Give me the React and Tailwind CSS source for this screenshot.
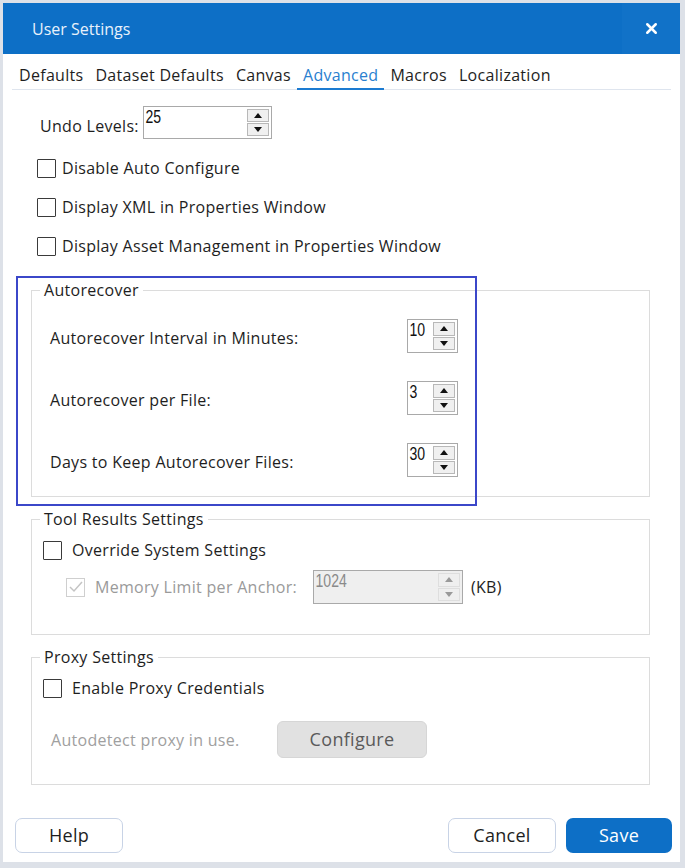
import { X } from 'lucide-react';

const ui = { fontFamily: '"Open Sans", "Noto Sans", sans-serif' };
const num = { fontFamily: '"Liberation Sans", "DejaVu Sans", sans-serif' };

function Arrow({ up, disabled }) {
    return (
        <svg width="8" height="5" viewBox="0 0 8 5">
            <polygon
                points={up ? '0,5 8,5 4,0' : '0,0 8,0 4,5'}
                fill={disabled ? '#9a9a9a' : '#111'}
            />
        </svg>
    );
}

function Spinner({ value, className, disabled }) {
    return (
        <div
            className={`flex justify-between border border-[#a9a9a9] ${disabled ? 'bg-[#efefef]' : 'bg-white'} ${className}`}
        >
            <span
                style={num}
                className={`inline-block origin-top-left scale-x-[0.78] pl-[2px] pt-[1px] text-[18px] leading-[19px] tracking-normal ${disabled ? 'text-[#8a8a8a]' : 'text-[#111]'}`}
            >
                {value}
            </span>
            <div className="flex flex-col gap-[1px] py-[2px] pr-[2px]">
                <div className={`flex w-[22px] flex-1 items-center justify-center border ${disabled ? 'border-[#dedede]' : 'border-[#b8b8b8] bg-[#f0f0f0]'}`}>
                    <Arrow up disabled={disabled} />
                </div>
                <div className={`flex w-[22px] flex-1 items-center justify-center border ${disabled ? 'border-[#dedede]' : 'border-[#b8b8b8] bg-[#f0f0f0]'}`}>
                    <Arrow disabled={disabled} />
                </div>
            </div>
        </div>
    );
}

function Check({ label, className = '', gap = 'gap-[6px]' }) {
    return (
        <label className={`flex items-center ${gap} ${className}`}>
            <span className="h-[19px] w-[19px] rounded-[1px] border-[1.5px] border-[#3a3a3a] bg-white" />
            <span className="text-[16px] leading-[20px] text-[#1e1e1e]">{label}</span>
        </label>
    );
}

function Group({ title, className = '', children }) {
    return (
        <fieldset className={`ml-[28px] mr-[30px] border border-[#dcdcdc] ${className}`}>
            <legend className="ml-[8px] px-[4px] text-[16px] leading-[20px] text-[#1e1e1e]">{title}</legend>
            {children}
        </fieldset>
    );
}

export default function App() {
    const tabs = ['Defaults', 'Dataset Defaults', 'Canvas', 'Advanced', 'Macros', 'Localization'];
    const recover = [
        { label: 'Autorecover Interval in Minutes:', value: '10' },
        { label: 'Autorecover per File:', value: '3' },
        { label: 'Days to Keep Autorecover Files:', value: '30' },
    ];

    return (
        <div style={ui} className="h-[868px] w-[685px] bg-[#dde1e8] pb-[6px] pl-[3px] pr-[5px] pt-[3px] tracking-[0.3px]">
            <div className="flex h-full flex-col bg-white">
                {/* Title bar */}
                <div className="flex h-[51px] shrink-0 items-stretch justify-between bg-[#0d6fc6]">
                    <span className="self-center pl-[29px] text-[16px] tracking-normal text-[#e8f1fb]">User Settings</span>
                    <div className="flex w-[58px] items-center justify-center bg-[#1172c8]">
                        <X size={17} strokeWidth={3.5} className="text-white" />
                    </div>
                </div>

                {/* Tabs */}
                <div className="ml-[9px] mr-[9px] mt-[9px] flex border-b border-[#dfe5ee] pl-[1px]">
                    {tabs.map((t) => (
                        <div
                            key={t}
                            className={`-mb-px px-[6px] pb-[1px] text-[16px] leading-[24px] ${
                                t === 'Advanced' ? 'border-b-2 border-[#1c7bd1] text-[#2a7fcf]' : 'border-b-2 border-transparent text-[#1e1e1e]'
                            }`}
                        >
                            {t}
                        </div>
                    ))}
                </div>

                {/* Undo levels */}
                <div className="mt-[16px] flex items-start pl-[37px]">
                    <span className="mr-[4px] mt-[9px] text-[16px] leading-[22px] text-[#1e1e1e]">Undo Levels:</span>
                    <Spinner value="25" className="h-[33px] w-[129px]" />
                </div>

                <div className="mt-[19px] flex flex-col gap-[19px] pl-[34px]">
                    <Check label="Disable Auto Configure" />
                    <Check label="Display XML in Properties Window" />
                    <Check label="Display Asset Management in Properties Window" />
                </div>

                {/* Autorecover */}
                <div className="relative mt-[24px]">
                    <Group title="Autorecover" className="pb-[19px] pt-[19px]">
                        <div className="flex flex-col gap-[28px] pl-[18px]">
                            {recover.map((r) => (
                                <div key={r.label} className="flex items-center">
                                    <span className="w-[357px] pt-[4px] text-[16px] leading-[22px] text-[#1e1e1e]">{r.label}</span>
                                    <Spinner value={r.value} className="h-[34px] w-[51px]" />
                                </div>
                            ))}
                        </div>
                    </Group>
                    <div className="pointer-events-none absolute left-[13px] top-[-4px] h-[230px] w-[461px] border-2 border-[#3b47c9]" />
                </div>

                {/* Tool results */}
                <Group title="Tool Results Settings" className="mt-[12px] pb-[30px] pt-[11px]">
                    <Check label="Override System Settings" gap="gap-[10px]" className="pl-[11px]" />
                    <div className="mt-[10px] flex items-center pl-[34px]">
                        <span className="flex h-[19px] w-[19px] items-center justify-center border border-[#cfcfcf]">
                            <svg width="14" height="12" viewBox="0 0 14 12">
                                <polyline points="1,6 5,10 13,1" fill="none" stroke="#c4c4c4" strokeWidth="1.5" />
                            </svg>
                        </span>
                        <span className="ml-[10px] w-[218px] text-[16px] leading-[22px] text-[#9a9a9a]">Memory Limit per Anchor:</span>
                        <Spinner value="1024" disabled className="h-[34px] w-[150px]" />
                        <span className="ml-[8px] text-[16px] leading-[22px] text-[#1e1e1e]">(KB)</span>
                    </div>
                </Group>

                {/* Proxy */}
                <Group title="Proxy Settings" className="mt-[12px] pb-[26px] pt-[11px]">
                    <Check label="Enable Proxy Credentials" gap="gap-[10px]" className="pl-[11px]" />
                    <div className="mt-[23px] flex items-center pl-[19px]">
                        <span className="w-[226px] text-[16px] leading-[22px] text-[#a0a0a0]">Autodetect proxy in use.</span>
                        <button className="h-[37px] w-[150px] rounded-[6px] border border-[#d6d6d6] bg-[#e1e1e1] text-[18px] text-[#5a5a5a]">
                            Configure
                        </button>
                    </div>
                </Group>

                {/* Footer */}
                <div className="mt-[33px] flex items-center pl-[12px] pr-[8px]">
                    <button className="h-[35px] w-[108px] rounded-[7px] border border-[#c8d3e6] bg-white text-[18px] text-[#1e1e1e]">
                        Help
                    </button>
                    <div className="ml-auto flex gap-[10px]">
                        <button className="h-[35px] w-[108px] rounded-[7px] border border-[#c8d3e6] bg-white text-[18px] text-[#1e1e1e]">
                            Cancel
                        </button>
                        <button className="h-[35px] w-[106px] rounded-[7px] bg-[#0d6fc6] text-[18px] text-white">
                            Save
                        </button>
                    </div>
                </div>
            </div>
        </div>
    );
}
